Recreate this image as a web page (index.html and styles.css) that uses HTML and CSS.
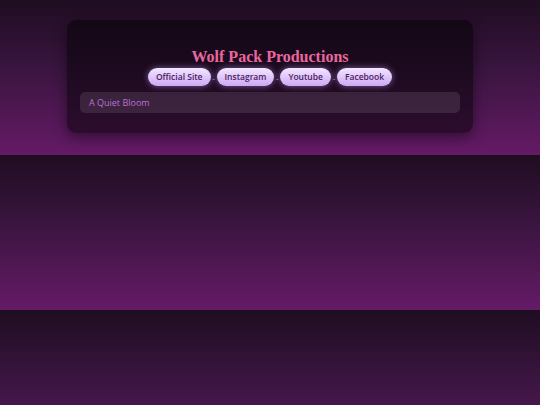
FILE: index.html
```html
<!DOCTYPE html>
<html>
<head>
<meta charset="utf-8">
<link rel="stylesheet" href="styles.css">
</head>
<body>
<main class="card">
  <h1 class="title">Wolf Pack Productions</h1>
  <nav class="links">
    <a class="pill" href="#">Official Site</a><span class="sep">-</span><a class="pill" href="#">Instagram</a><span class="sep">-</span><a class="pill" href="#">Youtube</a><span class="sep">-</span><a class="pill" href="#">Facebook</a>
  </nav>
  <div class="item">A Quiet Bloom</div>
</main>
</body>
</html>
```

FILE: styles.css
```css
html {
  margin: 0;
}
body {
  margin: 0;
  padding: 20px 0 21.5px;
  background: linear-gradient(to bottom, #1f0d21 0%, #3a1540 45%, #651a66 100%);
  font-family: "Open Sans", "DejaVu Sans", sans-serif;
}
.card {
  width: 406px;
  box-sizing: border-box;
  margin: 0 auto;
  padding: 27px 13px 20px;
  height: 113px;
  border-radius: 9px;
  background: rgba(0, 0, 0, 0.5);
  box-shadow: 0 4px 14px rgba(0, 0, 0, 0.45);
}
.title {
  margin: 0;
  text-align: center;
  font-family: "Liberation Serif", "DejaVu Serif", serif;
  font-weight: bold;
  font-size: 16px;
  line-height: 19px;
  color: #e8689d;
}
.links {
  display: flex;
  justify-content: center;
  align-items: center;
  margin-top: 2px;
}
.pill {
  display: inline-block;
  height: 18px;
  line-height: 18px;
  padding: 0 8px;
  border-radius: 9px;
  background: linear-gradient(to bottom, #f3e6ff, #cda8f5);
  box-shadow: 0 0 6px rgba(205, 160, 255, 0.55);
  color: #4b1d5c;
  font-size: 8.5px;
  font-weight: 600;
  text-decoration: none;
}
.sep {
  color: #b9a9bd;
  font-size: 8px;
  width: 6px;
  text-align: center;
}
.item {
  margin-top: 6px;
  height: 21px;
  line-height: 21px;
  padding: 0 9px;
  border-radius: 5px;
  background: rgba(255, 255, 255, 0.1);
  color: #b872d4;
  font-size: 9px;
  font-weight: 500;
}
```
